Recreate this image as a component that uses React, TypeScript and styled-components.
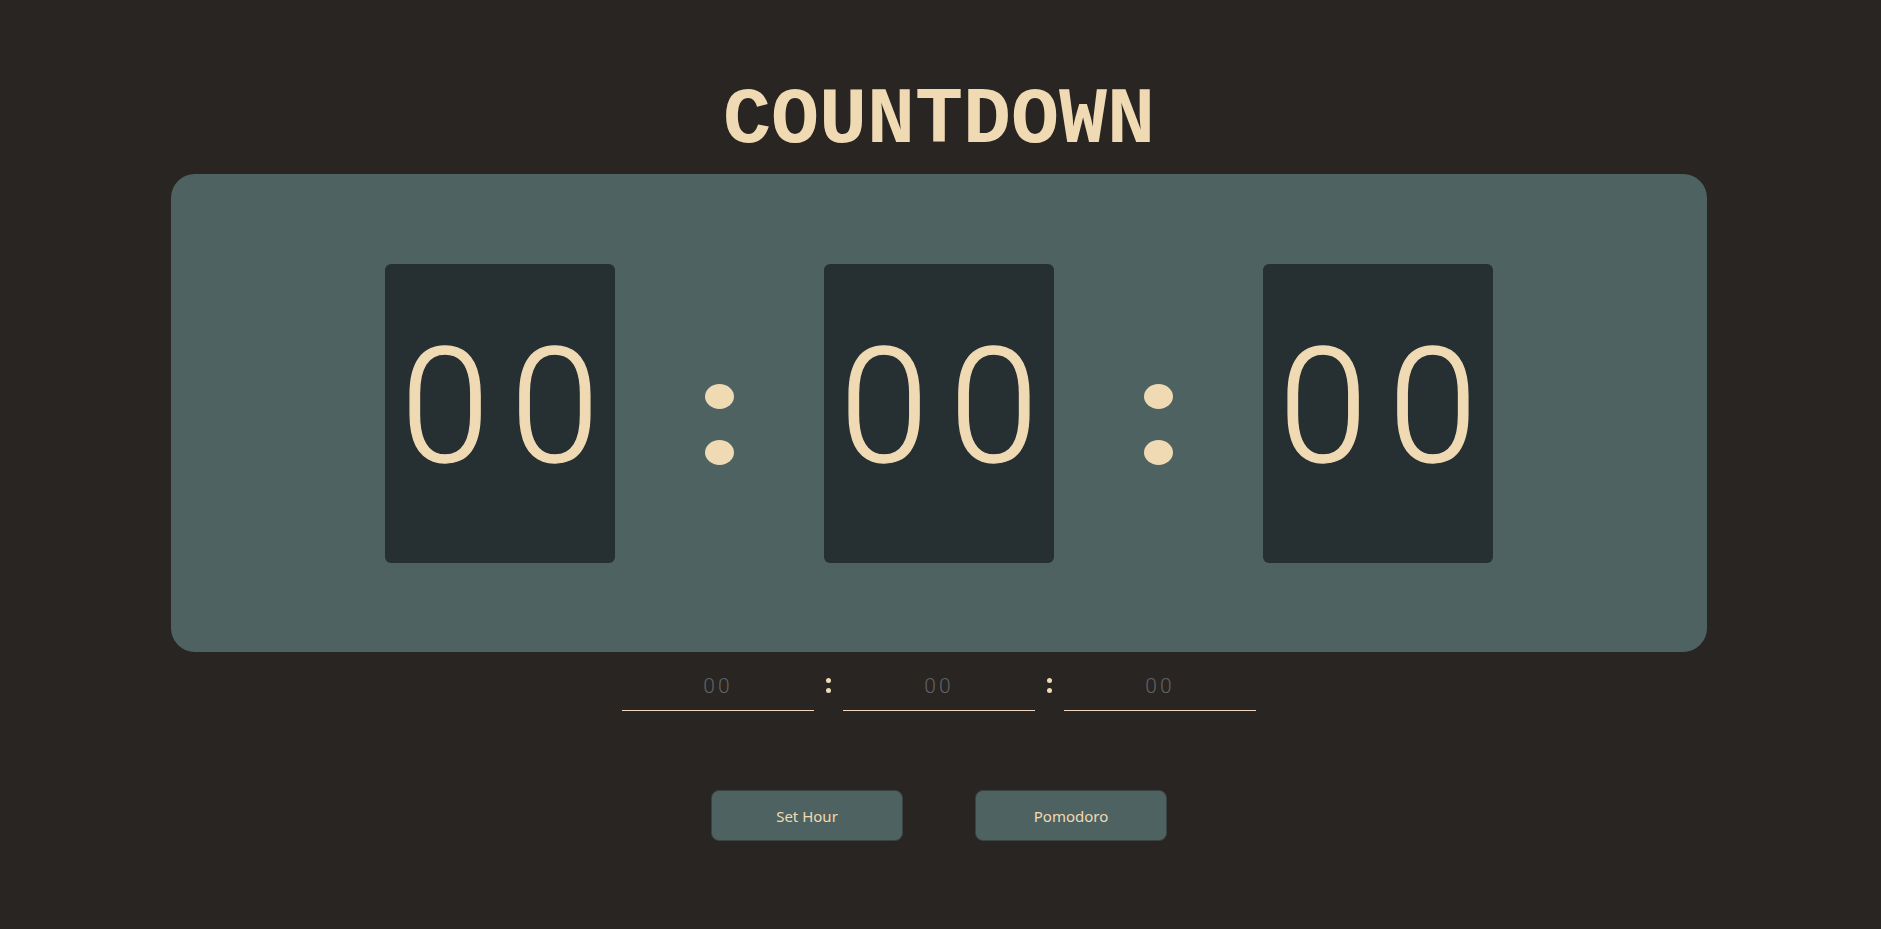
import React from "react";
import styled, { createGlobalStyle } from "styled-components";

const Global = createGlobalStyle`
  html, body { margin: 0; padding: 0; background: #292522; }
  body { font-family: "Noto Sans", "Open Sans", sans-serif; }
`;

const Page = styled.main`
  display: flex;
  flex-direction: column;
  align-items: center;
  min-height: 929px;
  box-sizing: border-box;
  padding: 80px 3px 0 0;
`;

const Title = styled.h1`
  margin: 0 0 12px;
  font-family: "Courier New", "Nimbus Mono PS", "Liberation Mono", monospace;
  font-weight: 700;
  font-size: 80px;
  line-height: 82px;
  color: #f0dab4;
  letter-spacing: 0;
`;

const Panel = styled.section`
  width: 1536px;
  height: 478px;
  box-sizing: border-box;
  background: #4e6361;
  border-radius: 24px;
  display: flex;
  justify-content: center;
  align-items: center;
`;

const Card = styled.div`
  width: 230px;
  height: 299px;
  background: #263032;
  border-radius: 6px;
  display: flex;
  align-items: center;
  justify-content: center;
  box-sizing: border-box;
  padding-bottom: 12px;
`;

const Digits = styled.span`
  font-family: "Roboto", sans-serif;
  font-weight: 300;
  font-size: 160px;
  line-height: 1;
  color: #f0dab4;
  -webkit-text-stroke: 1.3px #f0dab4;
  letter-spacing: 21px;
  margin-right: -21px;
`;

const BigColon = styled.div`
  width: 209px;
  display: flex;
  flex-direction: column;
  align-items: center;
  gap: 31px;
  padding-top: 22px;
`;

const Dot = styled.span<{ $w: number; $h: number }>`
  display: block;
  width: ${(p) => p.$w}px;
  height: ${(p) => p.$h}px;
  border-radius: 50%;
  background: #f0dab4;
`;

const InputRow = styled.div`
  margin-top: 22px;
  display: flex;
  align-items: flex-end;
`;

const TimeInput = styled.input`
  width: 192px;
  box-sizing: border-box;
  background: transparent;
  border: none;
  border-bottom: 1.5px solid #f2d6c0;
  outline: none;
  text-align: center;
  font-family: "Roboto", sans-serif;
  font-weight: 300;
  font-size: 21px;
  letter-spacing: 3px;
  padding: 0 0 12px;
  color: #f0dab4;
  &::placeholder {
    color: #5e6366;
  }
`;

const SmallColon = styled.div`
  width: 29px;
  display: flex;
  flex-direction: column;
  align-items: center;
  gap: 5px;
  padding-bottom: 18px;
`;

const Buttons = styled.div`
  margin-top: 79px;
  display: flex;
  gap: 72px;
`;

const Button = styled.button`
  width: 192px;
  height: 51px;
  background: #4e6361;
  border: 1px solid #3a4442;
  border-radius: 8px;
  color: #f0dab4;
  font-family: "Noto Sans", "Open Sans", sans-serif;
  font-size: 15px;
  cursor: pointer;
`;

export default function App() {
  return (
    <>
      <Global />
      <Page>
        <Title>COUNTDOWN</Title>
        <Panel>
          <Card>
            <Digits>00</Digits>
          </Card>
          <BigColon>
            <Dot $w={29} $h={25} />
            <Dot $w={29} $h={25} />
          </BigColon>
          <Card>
            <Digits>00</Digits>
          </Card>
          <BigColon>
            <Dot $w={29} $h={25} />
            <Dot $w={29} $h={25} />
          </BigColon>
          <Card>
            <Digits>00</Digits>
          </Card>
        </Panel>
        <InputRow>
          <TimeInput placeholder="00" />
          <SmallColon>
            <Dot $w={5} $h={5} />
            <Dot $w={5} $h={5} />
          </SmallColon>
          <TimeInput placeholder="00" />
          <SmallColon>
            <Dot $w={5} $h={5} />
            <Dot $w={5} $h={5} />
          </SmallColon>
          <TimeInput placeholder="00" />
        </InputRow>
        <Buttons>
          <Button>Set Hour</Button>
          <Button>Pomodoro</Button>
        </Buttons>
      </Page>
    </>
  );
}
